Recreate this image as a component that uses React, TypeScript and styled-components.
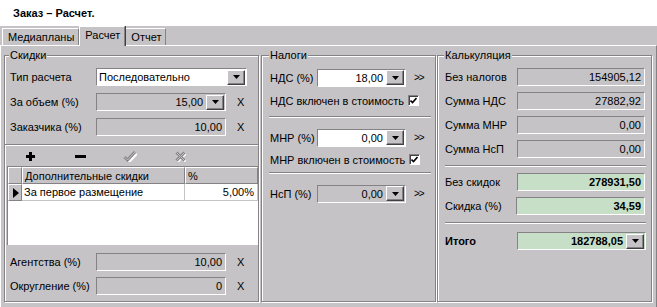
import React from "react";
import styled, { createGlobalStyle } from "styled-components";

const GRAY = "#c5c3c6";
const SHADOW = "#848284";
const DARK = "#424142";
const GREEN = "#c6dfc6";

const Global = createGlobalStyle`
  html, body { margin: 0; padding: 0; background: #fff; }
  body {
    font-family: "Liberation Sans", Arial, sans-serif;
    font-size: 11px;
    color: #000;
  }
`;

const Window = styled.div`
  width: 657px;
  height: 307px;
  display: flex;
  flex-direction: column;
  overflow: hidden;
  background: #fff;
`;

const Caption = styled.div`
  height: 26px;
  box-sizing: border-box;
  padding: 0 0 1px 13px;
  display: flex;
  align-items: center;
  font-weight: bold;
`;

const TabStrip = styled.div`
  height: 19px;
  flex: none;
  background: ${GRAY};
  display: flex;
  align-items: flex-end;
  padding-left: 2px;
`;

const Tab = styled.div<{ $active?: boolean }>`
  position: relative;
  z-index: ${(p) => (p.$active ? 1 : 0)};
  height: ${(p) => (p.$active ? 20 : 17)}px;
  margin-bottom: ${(p) => (p.$active ? -1 : 0)}px;
  box-sizing: border-box;
  padding: 2px 4px 0 5px;
  line-height: 13px;
  background: ${GRAY};
  border-top: 1px solid #fff;
  border-left: 1px solid #fff;
  border-right: 1px solid ${SHADOW};
  box-shadow: ${(p) => (p.$active ? `1px 0 0 ${DARK}` : "none")};
`;

const Page = styled.div`
  flex: 1;
  box-sizing: border-box;
  background: ${GRAY};
  border-top: 1px solid #fff;
  border-left: 1px solid #fff;
  border-right: 1px solid ${SHADOW};
  padding: 9px 4px 5px 3px;
  display: flex;
`;

const Group = styled.div<{ $w: number; $gap: number }>`
  position: relative;
  flex: none;
  width: ${(p) => p.$w}px;
  margin-right: ${(p) => p.$gap}px;
  box-sizing: border-box;
  border: 1px solid ${SHADOW};
  box-shadow: inset 1px 1px 0 #fff, 1px 1px 0 #fff;
  display: flex;
  flex-direction: column;
`;

const GroupTitle = styled.span<{ $x: number }>`
  position: absolute;
  top: -7px;
  left: ${(p) => p.$x}px;
  padding: 0 1px;
  line-height: 13px;
  background: ${GRAY};
`;

const Stack = styled.div<{ $pad: string; $gap: number }>`
  display: flex;
  flex-direction: column;
  gap: ${(p) => p.$gap}px;
  padding: ${(p) => p.$pad};
  flex: none;
`;

const Row = styled.div<{ $h?: number }>`
  display: flex;
  align-items: center;
  height: ${(p) => p.$h ?? 22}px;
  flex: none;
  white-space: nowrap;
`;

const Label = styled.span<{ $w: number; $bold?: boolean }>`
  width: ${(p) => p.$w}px;
  flex: none;
  font-weight: ${(p) => (p.$bold ? "bold" : "normal")};
`;

const Field = styled.div<{ $w: number; $tone: "white" | "gray" | "green"; $bold?: boolean }>`
  width: ${(p) => p.$w}px;
  height: 18px;
  flex: none;
  box-sizing: border-box;
  border: 1px solid;
  border-color: ${SHADOW} #fff #fff ${SHADOW};
  background: ${(p) => (p.$tone === "white" ? "#fff" : p.$tone === "green" ? GREEN : GRAY)};
  font-weight: ${(p) => (p.$bold ? "bold" : "normal")};
  display: flex;
  align-items: center;
`;

const FieldText = styled.span<{ $left?: boolean }>`
  flex: 1;
  overflow: hidden;
  text-align: ${(p) => (p.$left ? "left" : "right")};
  padding: 0 ${(p) => (p.$left ? 0 : 3)}px 0 2px;
`;

const DropButton = styled.span`
  width: 18px;
  height: 15px;
  margin-right: 1px;
  flex: none;
  box-sizing: border-box;
  border: 1px solid;
  border-color: #fff ${DARK} ${DARK} #fff;
  box-shadow: inset -1px -1px 0 ${SHADOW};
  background: ${GRAY};
  display: flex;
  align-items: center;
  justify-content: center;
`;

const ClearMark = styled.span`
  margin-left: 11px;
  font-size: 11px;
`;

const More = styled.span`
  margin-left: 8px;
  font-size: 10px;
  letter-spacing: -1px;
`;

const CheckBox = styled.span`
  width: 11px;
  height: 11px;
  margin-left: 4px;
  box-sizing: border-box;
  border: 1px solid;
  border-color: ${SHADOW} #fff #fff ${SHADOW};
  box-shadow: inset 1px 1px 0 ${DARK};
  background: #fff;
  display: flex;
  align-items: center;
  justify-content: center;
`;

const Rule = styled.div<{ $m: string }>`
  flex: none;
  border-top: 1px solid ${SHADOW};
  border-bottom: 1px solid #fff;
  margin: ${(p) => p.$m};
`;

const Toolbar = styled.div`
  display: flex;
  height: 20px;
  flex: none;
`;

const ToolButton = styled.span`
  width: 50px;
  display: flex;
  align-items: center;
  justify-content: center;
`;

const Grid = styled.div`
  flex: 1;
  margin-left: 2px;
  background: #fff;
  border-left: 1px solid ${SHADOW};
  border-top: 1px solid ${SHADOW};
  display: flex;
  flex-direction: column;
`;

const GridRow = styled.div`
  display: flex;
  height: 17px;
  flex: none;
`;

const HeadCell = styled.div<{ $w?: number }>`
  ${(p) => (p.$w ? `width: ${p.$w}px; flex: none;` : "flex: 1;")}
  box-sizing: border-box;
  background: ${GRAY};
  border-top: 1px solid #fff;
  border-left: 1px solid #fff;
  border-right: 1px solid ${SHADOW};
  border-bottom: 1px solid ${SHADOW};
  padding-left: 2px;
  display: flex;
  align-items: center;
  justify-content: ${(p) => (p.$w === 14 ? "center" : "flex-start")};
  white-space: nowrap;
`;

const Cell = styled.div<{ $w?: number; $right?: boolean }>`
  ${(p) => (p.$w ? `width: ${p.$w}px; flex: none;` : "flex: 1;")}
  box-sizing: border-box;
  border-right: 1px solid ${GRAY};
  border-bottom: 1px solid ${GRAY};
  padding: 0 3px 0 2px;
  display: flex;
  align-items: center;
  justify-content: ${(p) => (p.$right ? "flex-end" : "flex-start")};
  white-space: nowrap;
`;

const Arrow = () => (
  <svg width="7" height="4" viewBox="0 0 7 4">
    <polygon points="0,0 7,0 3.5,4" fill="#000" />
  </svg>
);

const Tick = () => (
  <svg width="7" height="7" viewBox="0 0 7 7">
    <path d="M0.5 3.5l2 2l4 -4.5" stroke="#000" strokeWidth="1.6" fill="none" />
  </svg>
);

const PlusIcon = () => (
  <svg width="9" height="9" viewBox="0 0 9 9">
    <path d="M4.5 0v9M0 4.5h9" stroke="#000" strokeWidth="3" />
  </svg>
);

const MinusIcon = () => (
  <svg width="11" height="3" viewBox="0 0 11 3">
    <rect width="11" height="3" fill="#000" />
  </svg>
);

const OkIcon = () => (
  <svg width="14" height="11" viewBox="0 0 14 11">
    <path d="M2 6.5l3 3l7.5 -8" stroke="#fff" strokeWidth="3" fill="none" transform="translate(1 1)" />
    <path d="M1.5 6l3 3l7.5 -8" stroke={SHADOW} strokeWidth="3" fill="none" />
    <path d="M1.5 6l3 3l7.5 -8" stroke={GRAY} strokeWidth="1" fill="none" />
  </svg>
);

const CancelIcon = () => (
  <svg width="11" height="11" viewBox="0 0 11 11">
    <path d="M2 2l8 8M10 2l-8 8" stroke="#fff" strokeWidth="3" fill="none" transform="translate(0.5 0.5)" />
    <path d="M1.5 1.5l8 8M9.5 1.5l-8 8" stroke={SHADOW} strokeWidth="3" fill="none" />
    <path d="M1.5 1.5l8 8M9.5 1.5l-8 8" stroke={GRAY} strokeWidth="1" fill="none" />
  </svg>
);

const RowPointer = () => (
  <svg width="6" height="10" viewBox="0 0 6 10">
    <polygon points="0,0 6,5 0,10" fill="#000" />
  </svg>
);

const App = () => (
  <>
    <Global />
    <Window>
      <Caption>Заказ – Расчет.</Caption>
      <TabStrip>
        <Tab>Медиапланы</Tab>
        <Tab $active>Расчет</Tab>
        <Tab>Отчет</Tab>
      </TabStrip>
      <Page>
        <Group $w={255} $gap={2}>
          <GroupTitle $x={4}>Скидки</GroupTitle>
          <Stack $pad="10px 0 0 5px" $gap={3}>
            <Row>
              <Label $w={86}>Тип расчета</Label>
              <Field $w={151} $tone="white">
                <FieldText $left>Последовательно</FieldText>
                <DropButton><Arrow /></DropButton>
              </Field>
            </Row>
            <Row>
              <Label $w={86}>За объем (%)</Label>
              <Field $w={130} $tone="gray">
                <FieldText>15,00</FieldText>
                <DropButton><Arrow /></DropButton>
              </Field>
              <ClearMark>X</ClearMark>
            </Row>
            <Row>
              <Label $w={86}>Заказчика (%)</Label>
              <Field $w={130} $tone="gray">
                <FieldText>10,00</FieldText>
              </Field>
              <ClearMark>X</ClearMark>
            </Row>
          </Stack>
          <Rule $m="6px 0 0" />
          <Toolbar>
            <ToolButton><PlusIcon /></ToolButton>
            <ToolButton><MinusIcon /></ToolButton>
            <ToolButton><OkIcon /></ToolButton>
            <ToolButton><CancelIcon /></ToolButton>
          </Toolbar>
          <Grid>
            <GridRow>
              <HeadCell $w={14} />
              <HeadCell $w={163}>Дополнительные скидки</HeadCell>
              <HeadCell>%</HeadCell>
            </GridRow>
            <GridRow>
              <HeadCell $w={14}><RowPointer /></HeadCell>
              <Cell $w={163}>За первое размещение</Cell>
              <Cell $right>5,00%</Cell>
            </GridRow>
          </Grid>
          <Stack $pad="6px 0 4px 5px" $gap={2}>
            <Row>
              <Label $w={86}>Агентства (%)</Label>
              <Field $w={130} $tone="gray">
                <FieldText>10,00</FieldText>
              </Field>
              <ClearMark>X</ClearMark>
            </Row>
            <Row>
              <Label $w={86}>Округление (%)</Label>
              <Field $w={130} $tone="gray">
                <FieldText>0</FieldText>
              </Field>
              <ClearMark>X</ClearMark>
            </Row>
          </Stack>
        </Group>

        <Group $w={175} $gap={1}>
          <GroupTitle $x={7}>Налоги</GroupTitle>
          <Stack $pad="10px 4px 0 8px" $gap={0}>
            <Row $h={23}>
              <Label $w={47}>НДС (%)</Label>
              <Field $w={89} $tone="white">
                <FieldText>18,00</FieldText>
                <DropButton><Arrow /></DropButton>
              </Field>
              <More>&gt;&gt;</More>
            </Row>
            <Row $h={23}>
              НДС включен в стоимость
              <CheckBox><Tick /></CheckBox>
            </Row>
            <Rule $m="4px 0 8px -1px" />
            <Row $h={23}>
              <Label $w={47}>МНР (%)</Label>
              <Field $w={89} $tone="white">
                <FieldText>0,00</FieldText>
                <DropButton><Arrow /></DropButton>
              </Field>
              <More>&gt;&gt;</More>
            </Row>
            <Row $h={21}>
              МНР включен в стоимость
              <CheckBox><Tick /></CheckBox>
            </Row>
            <Rule $m="2px 0 8px -1px" />
            <Row $h={23}>
              <Label $w={47}>НсП (%)</Label>
              <Field $w={89} $tone="gray">
                <FieldText>0,00</FieldText>
                <DropButton><Arrow /></DropButton>
              </Field>
              <More>&gt;&gt;</More>
            </Row>
          </Stack>
        </Group>

        <Group $w={215} $gap={0}>
          <GroupTitle $x={6}>Калькуляция</GroupTitle>
          <Stack $pad="10px 5px 0 7px" $gap={2}>
            <Row>
              <Label $w={72}>Без налогов</Label>
              <Field $w={128} $tone="gray"><FieldText>154905,12</FieldText></Field>
            </Row>
            <Row>
              <Label $w={72}>Сумма НДС</Label>
              <Field $w={128} $tone="gray"><FieldText>27882,92</FieldText></Field>
            </Row>
            <Row>
              <Label $w={72}>Сумма МНР</Label>
              <Field $w={128} $tone="gray"><FieldText>0,00</FieldText></Field>
            </Row>
            <Row>
              <Label $w={72}>Сумма НсП</Label>
              <Field $w={128} $tone="gray"><FieldText>0,00</FieldText></Field>
            </Row>
            <Rule $m="3px 0 2px" />
            <Row>
              <Label $w={72}>Без скидок</Label>
              <Field $w={128} $tone="green" $bold><FieldText>278931,50</FieldText></Field>
            </Row>
            <Row>
              <Label $w={71}>Скидка (%)</Label>
              <Field $w={129} $tone="green" $bold><FieldText>34,59</FieldText></Field>
            </Row>
            <Rule $m="3px 0 4px" />
            <Row>
              <Label $w={72} $bold>Итого</Label>
              <Field $w={129} $tone="green" $bold>
                <FieldText>182788,05</FieldText>
                <DropButton><Arrow /></DropButton>
              </Field>
            </Row>
          </Stack>
        </Group>
      </Page>
    </Window>
  </>
);

export default App;
